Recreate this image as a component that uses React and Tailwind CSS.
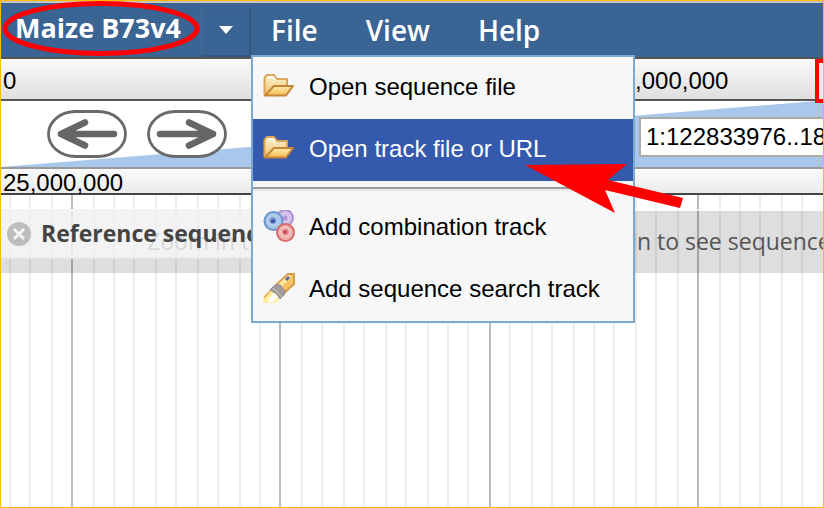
import React from 'react';

const SANS = "font-['Liberation_Sans',Arial,sans-serif]";
const HUMANIST = "font-['Open_Sans','Trebuchet_MS',sans-serif]";

const GRID_LINES = [
  9, 29, 51, 71, 93, 113, 133, 155, 175, 197, 217, 239, 259, 279, 301, 321, 343, 363, 385, 405, 427,
  447, 467, 489, 509, 531, 551, 573, 593, 613, 635, 655, 677, 697, 719, 739, 759, 781, 801,
];
const MAJOR_LINES = [71, 279, 489, 697];

function FolderIcon() {
  return (
    <svg width="32" height="28" viewBox="0 0 32 28" className="shrink-0" aria-hidden="true">
      <defs>
        <linearGradient id="folderBack" x1="0" y1="0" x2="0" y2="1">
          <stop offset="0" stopColor="#fff6d8" />
          <stop offset="1" stopColor="#eebd62" />
        </linearGradient>
        <linearGradient id="folderFront" x1="0" y1="0" x2="0" y2="1">
          <stop offset="0" stopColor="#ffedad" />
          <stop offset="1" stopColor="#f3bb53" />
        </linearGradient>
      </defs>
      <path d="M1.500 23V6l2.500-3h7l3 4h10v7" fill="url(#folderBack)" stroke="#dba65c" strokeWidth="2" strokeLinejoin="round" />
      <path d="M2 23.500l9-9.500h19l-7 9.500z" fill="url(#folderFront)" stroke="#c58538" strokeWidth="2" strokeLinejoin="round" />
      <path d="M5 5h5l2 3" fill="none" stroke="#ffffff" strokeWidth="2" opacity="0.7" />
    </svg>
  );
}

function CombinationIcon() {
  return (
    <svg width="32" height="32" viewBox="0 0 32 32" className="shrink-0" aria-hidden="true">
      <circle cx="22" cy="8" r="8" fill="#d3c0ea" stroke="#ab8fd2" strokeWidth="2" />
      <circle cx="22" cy="8" r="3.500" fill="#b498d8" stroke="#dccdf0" strokeWidth="1.500" />
      <circle cx="10.500" cy="11" r="9" fill="#aac7ea" stroke="#6795cd" strokeWidth="2" />
      <circle cx="10" cy="10.500" r="4.500" fill="#7f9fd8" stroke="#bcd4f0" strokeWidth="1.500" />
      <ellipse cx="10" cy="11" rx="2.200" ry="1.700" fill="#3c479f" />
      <circle cx="22.500" cy="22.500" r="8.500" fill="#f1b3b0" stroke="#d76a6a" strokeWidth="2" />
      <circle cx="22.500" cy="22" r="4.200" fill="#e48686" stroke="#f6cbc8" strokeWidth="1.500" />
      <ellipse cx="22" cy="22" rx="2" ry="1.600" fill="#c6444d" />
    </svg>
  );
}

function TorchIcon() {
  return (
    <svg width="32" height="32" viewBox="0 0 32 32" className="shrink-0" aria-hidden="true">
      <path d="M0 30l1-6 8-8 10 9-6 6H1z" fill="#ffeda0" />
      <path d="M1 26l6-7" fill="none" stroke="#e6bc67" strokeWidth="2" />
      <path d="M4 30l7-9 4 4-5 5z" fill="#ffffff" />
      <path d="M12 14L25 2h6v10L20 22z" fill="#f5c365" stroke="#d59b45" strokeWidth="2" strokeLinejoin="round" />
      <path d="M16 14L27 4" stroke="#ffe3a0" strokeWidth="4" />
      <path d="M7 18l5-5h5l5 6-1 4-4 4-3-5z" fill="#a39da0" stroke="#8a8588" strokeWidth="1" />
      <path d="M10 16l9 9" stroke="#b5afb1" strokeWidth="2" />
      <path d="M23 8l3-3" stroke="#5c6f9a" strokeWidth="3" />
    </svg>
  );
}

function MenuItem({ icon, children, active = false }) {
  return (
    <li role="none">
      <button
        type="button"
        role="menuitem"
        className={
          active
            ? 'flex h-[62px] w-full items-center bg-[#3559ac] pb-[2px] pl-[10px] text-left text-white'
            : 'flex h-[62px] w-full items-center pb-[2px] pl-[10px] text-left text-black'
        }
      >
        <span className="flex pb-[2px]">{icon}</span>
        <span className="ml-[14px] whitespace-nowrap">{children}</span>
      </button>
    </li>
  );
}

function FileMenu() {
  return (
    <ul
      role="menu"
      aria-label="File"
      className={`absolute left-[250px] top-[52px] z-20 w-[384px] border-2 border-[#79a8d0] bg-[#f7f7f7] text-[24px] ${SANS}`}
    >
      <MenuItem icon={<FolderIcon />}>Open sequence file</MenuItem>
      <MenuItem icon={<FolderIcon />} active>
        Open track file or URL
      </MenuItem>
      <li role="separator" className="py-[6px]">
        <div className="h-1 border-t-2 border-[#999999] bg-[#e8e8e8]" />
      </li>
      <MenuItem icon={<CombinationIcon />}>Add combination track</MenuItem>
      <MenuItem icon={<TorchIcon />}>Add sequence search track</MenuItem>
    </ul>
  );
}

function Header() {
  return (
    <header className={`relative flex h-14 shrink-0 items-start border-t-2 border-[#c9c5bd] bg-[#396494] text-[28px] text-white ${HUMANIST}`}>
      <h1 className="w-[200px] whitespace-nowrap pl-[14px] pt-[6px] text-[27px] font-bold leading-[38px]">Maize B73v4</h1>
      <button
        type="button"
        aria-label="Select dataset"
        className="mt-1 flex h-[50px] w-[50px] items-center justify-center border-2 border-b-[#345880] border-l-[#416993] border-r-[#345880] border-t-[#416993]"
      >
        <svg width="16" height="10" viewBox="0 0 16 10" aria-hidden="true" className="mb-1">
          <path d="M1 1h14L8 9z" fill="#ffffff" />
        </svg>
      </button>
      <nav className="flex gap-12 pl-5 pt-[8px] font-semibold leading-[38px]">
        <button type="button" aria-haspopup="menu" aria-expanded="true">File</button>
        <button type="button">View</button>
        <button type="button">Help</button>
      </nav>
      <FileMenu />
    </header>
  );
}

function OverviewRuler() {
  return (
    <div className={`relative flex h-11 shrink-0 items-center border-y-2 border-[#555555] bg-linear-to-b from-[#fafafa] to-[#dfdfdf] pl-[2px] pt-[3px] text-[24px] text-black ${SANS}`}>
      <span className="w-[296px] shrink-0">0</span>
      <span className="w-[296px] shrink-0">100,000,000</span>
      <span className="shrink-0">200,000,000</span>
      <div className="absolute -bottom-1 -right-1 top-0 z-10 w-[12px] border-4 border-[#ff0000] bg-[#e9edf3]" />
    </div>
  );
}

function PanButton({ label, flip = false }) {
  return (
    <button type="button" aria-label={label} className="shrink-0">
      <svg width="80" height="48" viewBox="0 0 80 48" className={flip ? 'block -scale-x-100' : 'block'}>
        <rect x="1.500" y="1.500" width="77" height="45" rx="27" ry="22.500" fill="#ffffff" stroke="#6a6a6a" strokeWidth="2.800" />
        <path d="M67 24H14M38 12.500L14 24l24 11.500" fill="none" stroke="#666666" strokeWidth="6.500" strokeLinecap="round" strokeLinejoin="round" />
        <path d="M14 24l18-9-5 9 5 9z" fill="#666666" />
      </svg>
    </button>
  );
}

function Navigation() {
  return (
    <div className="relative isolate flex h-[66px] shrink-0 items-center gap-5 overflow-hidden bg-white pl-[46px]">
      <svg className="absolute inset-0 -z-10 h-full w-full" viewBox="0 0 822 66" preserveAspectRatio="none" aria-hidden="true">
        <path d="M0 66L816 0H822V66z" fill="#a9c6eb" />
      </svg>
      <PanButton label="Pan left" />
      <PanButton label="Pan right" flip />
      <input
        type="text"
        aria-label="Location"
        defaultValue="1:122833976..184250963"
        className={`mb-[-6px] ml-[392px] h-10 w-[300px] shrink-0 border-2 border-[#aaaaaa] bg-white px-[5px] text-[24px] text-black ${SANS}`}
      />
    </div>
  );
}

function DetailRuler() {
  return (
    <div className={`flex h-7 shrink-0 items-center border-y-2 border-b-[#444444] border-t-[#999999] bg-linear-to-b from-[#fafafa] to-[#ebebeb] pl-[2px] text-[24px] leading-6 text-black ${SANS}`}>
      <span className="pt-[4px]">25,000,000</span>
    </div>
  );
}

function Tracks() {
  return (
    <main className="relative isolate grow overflow-hidden bg-white pt-[14px]">
      <svg className="absolute inset-y-0 left-[-1px] -z-10 h-full w-[824px]" aria-hidden="true">
        {GRID_LINES.map((x) => (
          <rect key={x} x={x} y="0" width="2" height="100%" fill={MAJOR_LINES.includes(x) ? '#bbbbbb' : '#ededed'} />
        ))}
      </svg>
      <section className={`relative h-16 border-t-2 border-white/70 bg-black/13 bg-clip-padding text-[23px] font-medium text-[#555555] ${HUMANIST}`}>
        <div className="flex h-full items-center overflow-hidden whitespace-nowrap pb-[2px] pl-[146px]">
          <span className="w-[416px] shrink-0">Zoom in to see sequence</span>
          <span className="shrink-0">Zoom in to see sequence</span>
        </div>
        <div className="absolute left-0 top-[-2px] flex h-[50px] w-[330px] items-center border-y-2 border-b-[#e6e6e6] border-t-[#f2f2f2] bg-[#f7f7f7]/80 pl-[6px]">
          <button type="button" aria-label="Close track" className="shrink-0">
            <svg width="24" height="24" viewBox="0 0 24 24" className="block">
              <circle cx="12" cy="12" r="12" fill="#bdbdbd" />
              <path d="M7 7l10 10M17 7L7 17" stroke="#f4f4f4" strokeWidth="3" />
            </svg>
          </button>
          <h2 className="ml-[10px] whitespace-nowrap pb-[2px] font-bold text-[#444444]">Reference sequence</h2>
        </div>
      </section>
    </main>
  );
}

function Annotations() {
  return (
    <svg className="pointer-events-none absolute left-0 top-0 z-30" width="824" height="508" viewBox="1 1 824 508" aria-hidden="true">
      <ellipse cx="101" cy="28.500" rx="96" ry="25" fill="none" stroke="#ff0000" strokeWidth="5" />
      <path d="M525 165L627 164L608 180L683 198L680 208L605 190L615 213z" fill="#ff0000" />
    </svg>
  );
}

export default function App() {
  return (
    <div className="relative flex min-h-screen flex-col overflow-hidden border border-[#ffb900] bg-white">
      <Header />
      <OverviewRuler />
      <Navigation />
      <DetailRuler />
      <Tracks />
      <Annotations />
    </div>
  );
}
